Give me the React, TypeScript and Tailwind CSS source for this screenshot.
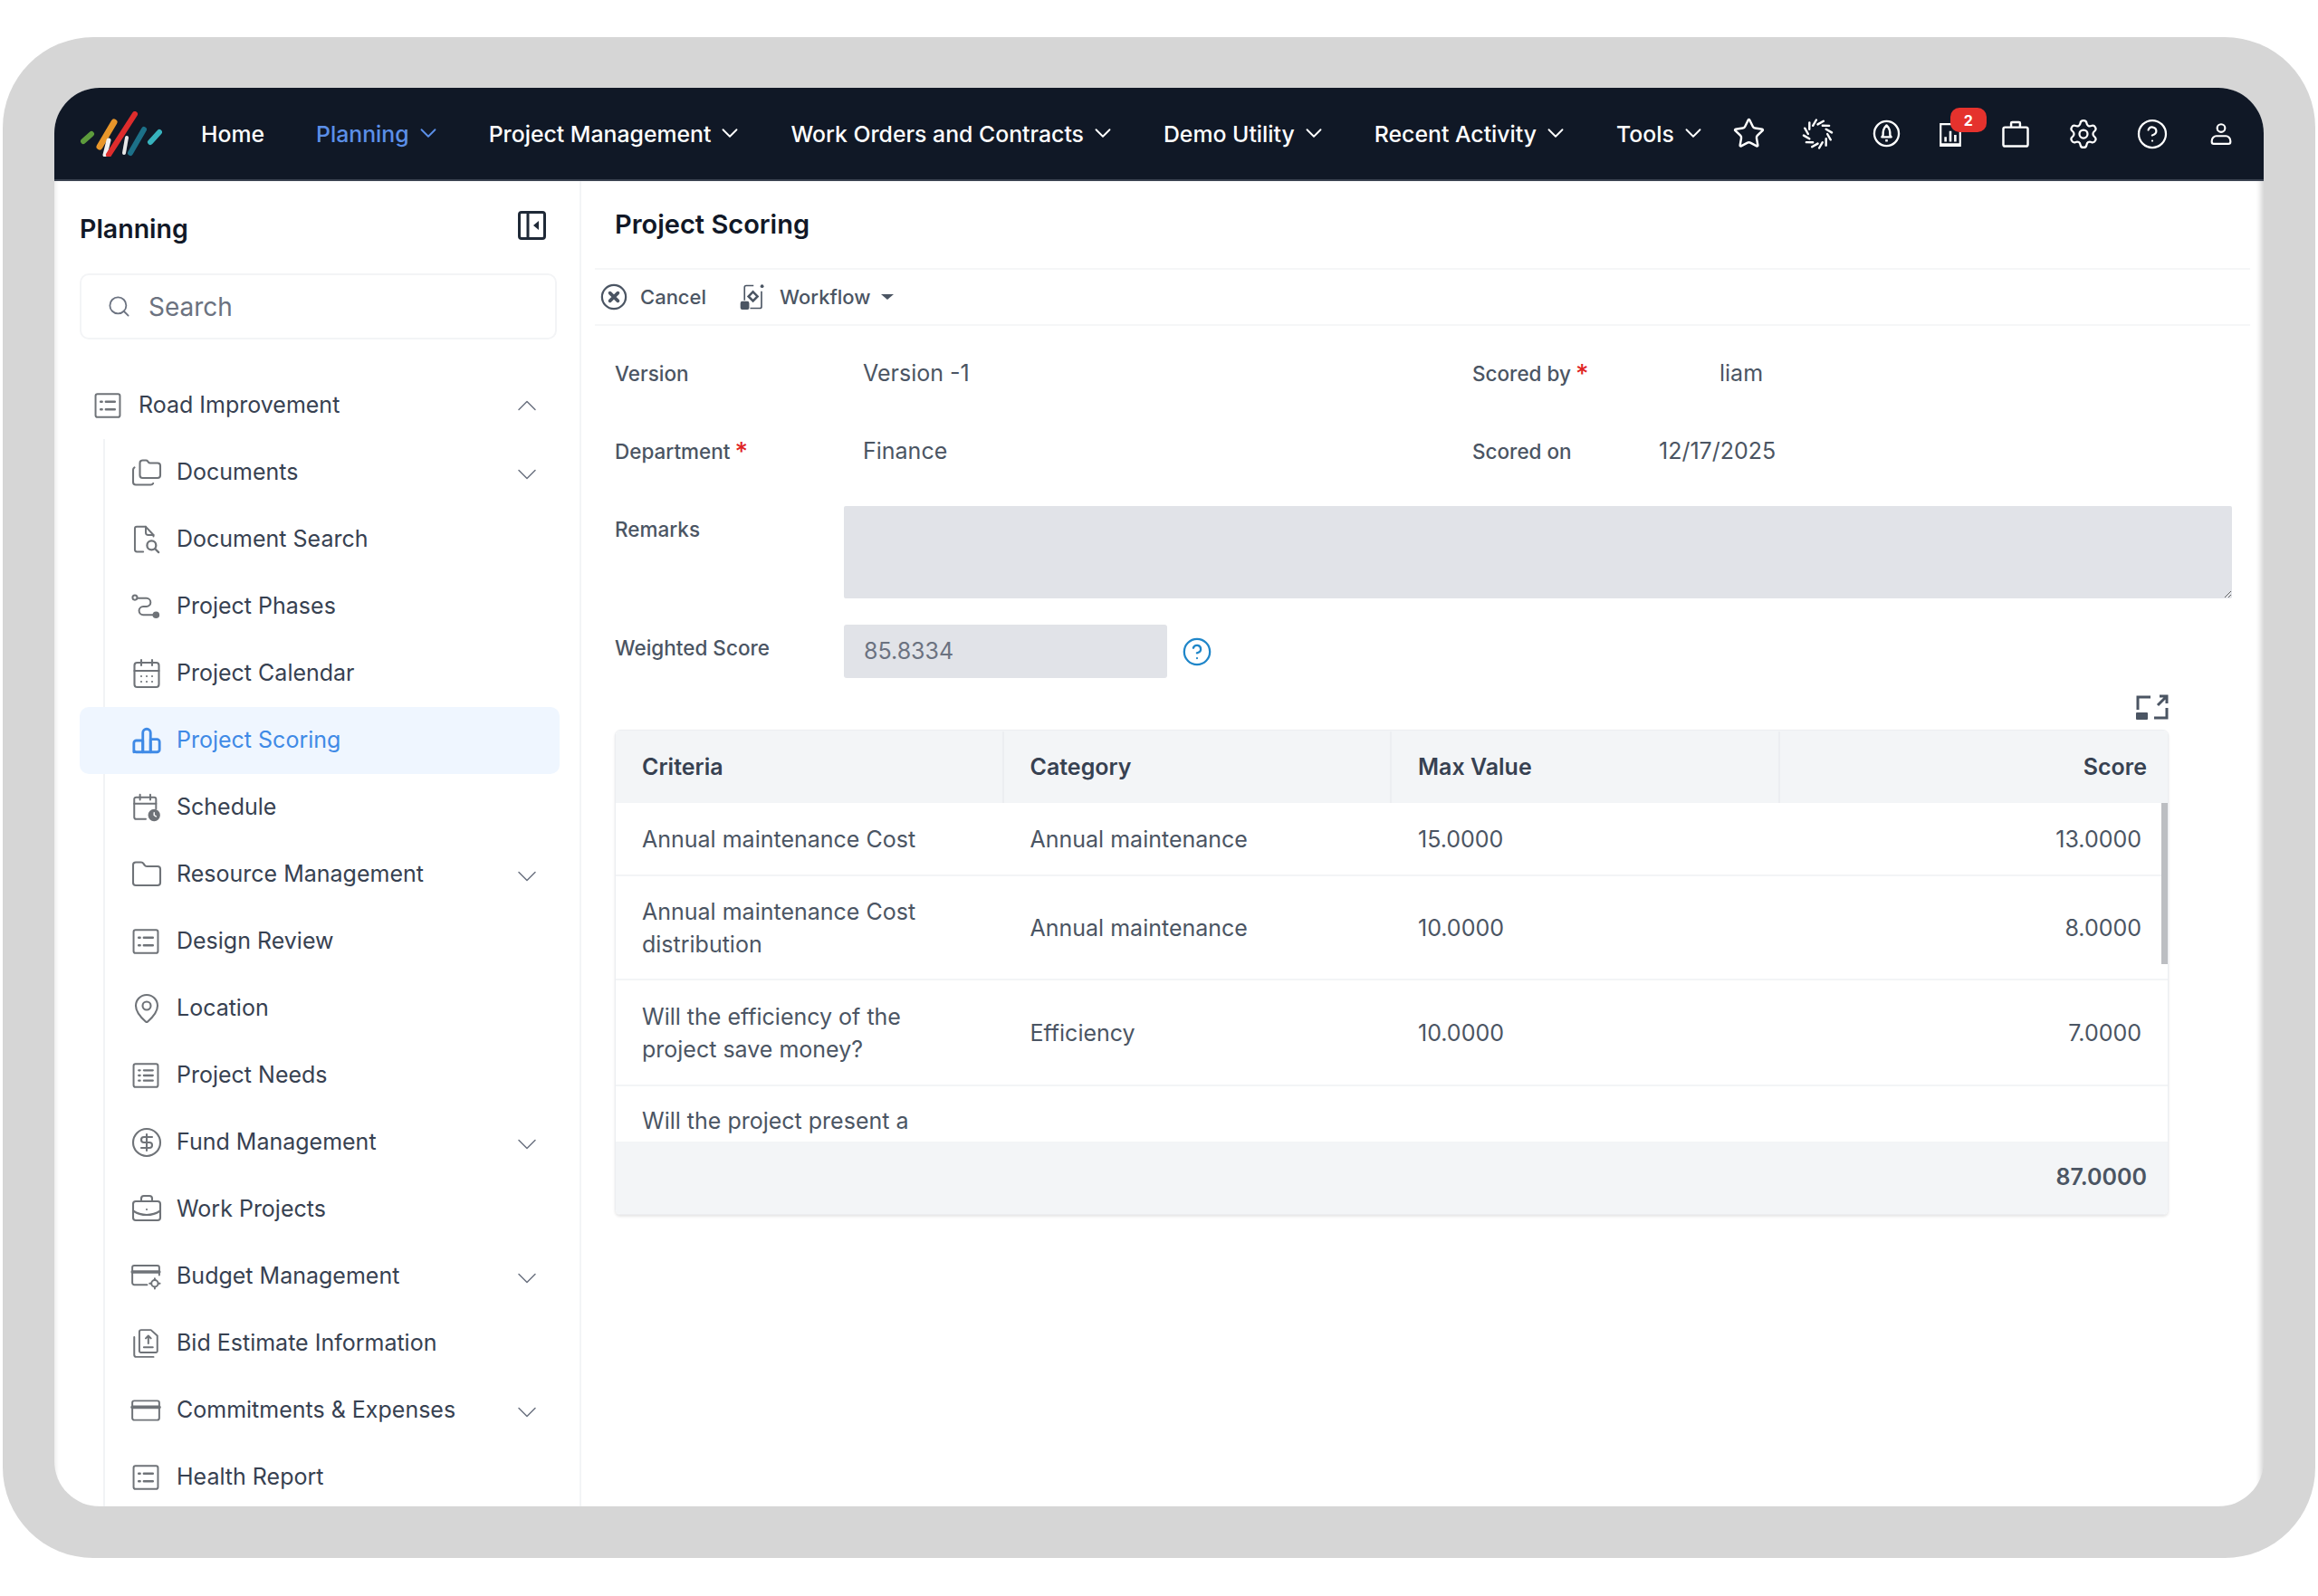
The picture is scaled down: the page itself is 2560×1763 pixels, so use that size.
import type { ReactNode } from "react";
import {
  BriefcaseBusiness,
  CalendarDays,
  ChevronDown,
  ChevronUp,
  CircleDollarSign,
  CircleHelp,
  Folder,
  Folders,
  MapPin,
  Search,
  Settings,
  Star,
} from "lucide-react";

const stroke = {
  fill: "none",
  stroke: "currentColor",
  strokeWidth: 1.4,
  strokeLinecap: "round" as const,
  strokeLinejoin: "round" as const,
};

const iconClass = "shrink-0";

function ListBox() {
  return (
    <svg width={34} height={34} viewBox="0 0 24 24" {...stroke} className={iconClass}>
      <rect x="2.500" y="3" width="19" height="18" rx="1.500" />
      <path d="M10.500 9h7M10.500 15h7M6.500 9h1M6.500 15h1" strokeWidth="1.800" />
    </svg>
  );
}

function TableBox() {
  return (
    <svg width={34} height={34} viewBox="0 0 24 24" {...stroke} className={iconClass}>
      <rect x="2.500" y="3" width="19" height="18" rx="1.500" />
      <path d="M6.500 8h1M6.500 12h1M6.500 16h1M10.500 8h7M10.500 12h7M10.500 16h7" strokeWidth="1.600" />
    </svg>
  );
}

function DocSearch() {
  return (
    <svg width={34} height={34} viewBox="0 0 24 24" {...stroke} className={iconClass}>
      <path d="M10 21.500H5a1.500 1.500 0 0 1-1.500-1.500V3.500A1.500 1.500 0 0 1 5 2h7l6 6.500v1" />
      <path d="M12 2v4.500a2 2 0 0 0 2 2h4" />
      <circle cx="16.500" cy="16.500" r="3.500" strokeWidth="1.600" />
      <path d="M19.200 19.200 22 22" strokeWidth="1.600" />
    </svg>
  );
}

function PhaseRoute() {
  return (
    <svg width={34} height={34} viewBox="0 0 24 24" {...stroke} className={iconClass}>
      <circle cx="3.500" cy="5" r="1.800" />
      <path d="M5.500 5.500h7a3.200 3.200 0 0 1 0 6.500H10a3.200 3.200 0 0 0 0 6.500h8" />
      <circle cx="20" cy="18.500" r="2" fill="currentColor" />
    </svg>
  );
}

function ScheduleCal() {
  return (
    <svg width={34} height={34} viewBox="0 0 24 24" {...stroke} className={iconClass}>
      <path d="M12 21H4.500A1.500 1.500 0 0 1 3 19.500v-14A1.500 1.500 0 0 1 4.500 4h14A1.500 1.500 0 0 1 20 5.500V13" />
      <path d="M3 9h17M7.500 2v4M15.500 2v4" />
      <circle cx="18.500" cy="18" r="4" fill="currentColor" />
      <path d="M18.500 16v2l1.500 1" stroke="#ffffff" strokeWidth="1" />
    </svg>
  );
}

function ScoreBars() {
  return (
    <svg width={36} height={34} viewBox="0 0 24 24" fill="none" stroke="currentColor" strokeWidth="2" strokeLinejoin="round" className={iconClass}>
      <path d="M2 21v-7a2 2 0 0 1 2-2h5v9H4a2 2 0 0 1-2-2z" />
      <path d="M9 21V6a3 3 0 0 1 6 0v15z" />
      <path d="M15 11h5a2 2 0 0 1 2 2v6a2 2 0 0 1-2 2h-5z" />
    </svg>
  );
}

function BudgetCard() {
  return (
    <svg width={34} height={34} viewBox="0 0 24 24" {...stroke} className={iconClass}>
      <path d="M13 18.500H3a1.500 1.500 0 0 1-1.500-1.500V5A1.500 1.500 0 0 1 3 3.500h18A1.500 1.500 0 0 1 22.500 5v6" />
      <path d="M1.500 8.500h21" strokeWidth="2.400" />
      <circle cx="19" cy="17.500" r="2.600" />
      <path d="M19 13.500v1.200M19 20.300v1.200M15 17.500h1.200M21.800 17.500H23" />
    </svg>
  );
}

function BidFiles() {
  return (
    <svg width={34} height={34} viewBox="0 0 24 24" {...stroke} className={iconClass}>
      <path d="M3 7v14a1.500 1.500 0 0 0 1.500 1.500H18" />
      <path d="M7 3a1.500 1.500 0 0 1 1.500-1.500H16l5 4.500v12a1 1 0 0 1-1 1H8a1 1 0 0 1-1-1z" />
      <path d="M14 6v6M12 8l2-2 2 2M10.500 15h7" />
    </svg>
  );
}

function CardIcon() {
  return (
    <svg width={34} height={34} viewBox="0 0 24 24" {...stroke} className={iconClass}>
      <rect x="1.500" y="4.500" width="21" height="15" rx="1.500" />
      <path d="M1.500 9.500h21" strokeWidth="2.600" />
    </svg>
  );
}

function Logo() {
  return (
    <svg width={90} height={50} viewBox="0 0 90 50" fill="none" strokeLinecap="round" className="shrink-0">
      <path d="M3 33 12 25" stroke="#5d9b3c" strokeWidth="6" />
      <path d="M21 39 37 12" stroke="#e8962a" strokeWidth="7" />
      <path d="M31 32 27 48" stroke="#f2f2f2" strokeWidth="5" />
      <path d="M51 29 48 46" stroke="#e8e8e8" strokeWidth="4" />
      <path d="M31 48 60 3" stroke="#de2c2c" strokeWidth="6" />
      <path d="M55 46 70 20" stroke="#1c7088" strokeWidth="6" />
      <path d="M77 34 87 23" stroke="#37b2bd" strokeWidth="6" />
    </svg>
  );
}

function SwirlIcon() {
  // ring of twelve slanted dashes
  const dashes = Array.from({ length: 12 }, (_, i) => {
    const a = (i * Math.PI) / 6;
    const b = a + 0.42;
    return `M${(12 + 7.5 * Math.cos(a)).toFixed(2)} ${(12 + 7.5 * Math.sin(a)).toFixed(2)}L${(12 + 11 * Math.cos(b)).toFixed(2)} ${(12 + 11 * Math.sin(b)).toFixed(2)}`;
  }).join("");
  return (
    <svg width={35} height={34} viewBox="0 0 24 24" fill="none" stroke="currentColor" strokeWidth="1.700" strokeLinecap="round" className={iconClass}>
      <path d={dashes} />
    </svg>
  );
}

function RocketCircle() {
  return (
    <svg width={31} height={31} viewBox="0 0 24 24" fill="none" stroke="currentColor" strokeWidth="1.800" strokeLinejoin="round" className={iconClass}>
      <circle cx="12" cy="12" r="10.500" />
      <path d="M12 5c2.400 2.200 3.200 5 3 8.500l1 1.500H8l1-1.500C8.800 10 9.600 7.200 12 5z" />
      <path d="M11 18h2" />
    </svg>
  );
}

function ChartIcon() {
  return (
    <svg width={26} height={28} viewBox="0 0 24 26" fill="none" stroke="currentColor" strokeWidth="2" className={iconClass}>
      <path d="M2 2h20v22H2z" />
      <path d="M7 20v-5M12 20V9M17 20v-7" strokeWidth="2.400" />
      <path d="M2 23h20" strokeWidth="2.600" />
    </svg>
  );
}

function BagIcon() {
  return (
    <svg width={32} height={30} viewBox="0 0 26 24" fill="none" stroke="currentColor" strokeWidth="2" strokeLinejoin="round" className={iconClass}>
      <rect x="2" y="6" width="22" height="17" rx="1.500" />
      <path d="M9 6V2.500a1 1 0 0 1 1-1h6a1 1 0 0 1 1 1V6" />
    </svg>
  );
}

function UserIcon() {
  return (
    <svg width={26} height={27} viewBox="0 0 24 24" fill="none" stroke="currentColor" strokeWidth="2" className={iconClass}>
      <circle cx="12" cy="6.500" r="4" />
      <path d="M2.500 19.500c0-3 2.500-5 4.500-5h10c2 0 4.500 2 4.500 5v1a2 2 0 0 1-2 2h-15a2 2 0 0 1-2-2z" />
    </svg>
  );
}

function CancelIcon() {
  return (
    <svg width={30} height={30} viewBox="0 0 24 24" fill="none" stroke="#4b5563" strokeWidth="1.800" className={iconClass}>
      <circle cx="12" cy="12" r="10.500" />
      <path d="M8.500 8.500l7 7M15.500 8.500l-7 7" strokeWidth="3" strokeLinecap="round" />
    </svg>
  );
}

function WorkflowIcon() {
  return (
    <svg width={30} height={30} viewBox="0 0 24 24" fill="none" stroke="#4b5563" strokeWidth="1.300" className={iconClass}>
      <path d="M5 15V3.500a1.500 1.500 0 0 1 1.500-1.500H13M20 7v13.500a1.500 1.500 0 0 1-1.500 1.500H10" />
      <path d="M12.500 7.500l4 4-4 4-4-4z" strokeWidth="2" />
      <rect x="2" y="16.500" width="6.500" height="6" rx="1" fill="#4b5563" />
      <circle cx="20.500" cy="2.500" r="1.500" fill="#4b5563" stroke="none" />
    </svg>
  );
}

function ExpandIcon() {
  return (
    <svg width={36} height={28} viewBox="0 0 36 28" fill="none" stroke="#4b5563" strokeWidth="3" className={iconClass}>
      <path d="M2 17V3h14M34 15v11H20M33 3l-9 9M26 2h8v8" />
      <rect x="0" y="20" width="13" height="8" rx="1" fill="#4b5563" stroke="none" />
    </svg>
  );
}

function CollapseIcon() {
  return (
    <svg width={31} height={32} viewBox="0 0 31 32" fill="none" stroke="#1f2937" strokeWidth="3" className={iconClass}>
      <rect x="1.500" y="1.500" width="28" height="29" rx="2.500" />
      <path d="M11 2v28" />
      <path d="M23 11v10l-6-5z" fill="#1f2937" stroke="none" />
    </svg>
  );
}

type SideItem = { label: string; icon: ReactNode; chevron?: boolean; active?: boolean };

const lucideProps = { size: 36, strokeWidth: 1.4, className: iconClass };

const sideItems: SideItem[] = [
  { label: "Documents", icon: <Folders {...lucideProps} />, chevron: true },
  { label: "Document Search", icon: <DocSearch /> },
  { label: "Project Phases", icon: <PhaseRoute /> },
  { label: "Project Calendar", icon: <CalendarDays {...lucideProps} /> },
  { label: "Project Scoring", icon: <ScoreBars />, active: true },
  { label: "Schedule", icon: <ScheduleCal /> },
  { label: "Resource Management", icon: <Folder {...lucideProps} />, chevron: true },
  { label: "Design Review", icon: <ListBox /> },
  { label: "Location", icon: <MapPin {...lucideProps} /> },
  { label: "Project Needs", icon: <TableBox /> },
  { label: "Fund Management", icon: <CircleDollarSign {...lucideProps} />, chevron: true },
  { label: "Work Projects", icon: <BriefcaseBusiness {...lucideProps} /> },
  { label: "Budget Management", icon: <BudgetCard />, chevron: true },
  { label: "Bid Estimate Information", icon: <BidFiles /> },
  { label: "Commitments & Expenses", icon: <CardIcon />, chevron: true },
  { label: "Health Report", icon: <ListBox /> },
];

const navItems = ["Planning", "Project Management", "Work Orders and Contracts", "Demo Utility", "Recent Activity", "Tools"];

const rows = [
  { criteria: ["Annual maintenance Cost"], category: "Annual maintenance", max: "15.0000", score: "13.0000", h: "h-[81px]" },
  { criteria: ["Annual maintenance Cost", "distribution"], category: "Annual maintenance", max: "10.0000", score: "8.0000", h: "h-[115px]" },
  { criteria: ["Will the efficiency of the", "project save money?"], category: "Efficiency", max: "10.0000", score: "7.0000", h: "h-[117px]" },
];

function Required() {
  return <span className="ml-[5px] text-[28px] leading-none text-[#e02424]">*</span>;
}

function Navbar() {
  return (
    <header className="flex h-[103px] shrink-0 items-center border-b-2 border-[#3a4250] bg-[#101826] pl-[29px] text-white">
      <Logo />
      <nav className="ml-[43px] flex items-center gap-[52px] pt-[2px] text-[24.8px] font-medium">
        <span className="mr-[5px]">Home</span>
        {navItems.map((item) => (
          <span key={item} className={`flex items-center gap-[6px] ${item === "Planning" ? "text-[#5b8fe8]" : ""}`}>
            {item}
            <ChevronDown size={30} strokeWidth={1.5} className="-mt-[3px] shrink-0" />
          </span>
        ))}
      </nav>
      <div className="ml-[31px] flex items-center gap-[43px]">
        <span className="flex w-[31px] justify-center"><Star size={37} strokeWidth={1.6} className={iconClass} /></span>
        <SwirlIcon />
        <RocketCircle />
        <span className="relative -ml-px mt-[3px] flex">
          <ChartIcon />
          <span className="absolute left-[13px] top-[-16px] flex h-[27px] w-[40px] items-center justify-center rounded-[10px] bg-[#e5322d] text-[16px] font-bold">
            2
          </span>
        </span>
        <BagIcon />
        <span className="ml-[2px] flex w-[29px] justify-center"><Settings size={36} strokeWidth={1.5} className={iconClass} /></span>
        <span className="ml-[3px] flex w-[30px] justify-center"><CircleHelp size={36} strokeWidth={1.5} className={iconClass} /></span>
        <span className="ml-[5px] flex"><UserIcon /></span>
      </div>
    </header>
  );
}

function Sidebar() {
  return (
    <aside className="flex w-[582px] shrink-0 flex-col overflow-hidden border-r-2 border-[#f3f4f6] pl-[28px] pr-[22px]">
      <div className="flex h-[102px] shrink-0 items-center justify-between pr-[15px] pt-[5px]">
        <h2 className="text-[28.500px] font-semibold text-[#111827]">Planning</h2>
        <span className="-mt-[10px] flex"><CollapseIcon /></span>
      </div>
      <div className="mr-[3px] flex h-[73px] shrink-0 items-center gap-[19px] rounded-[10px] border-2 border-[#f3f4f6] pl-[28px] text-[28px] text-[#6b7280]">
        <Search size={27} strokeWidth={1.6} className={iconClass} />
        Search
      </div>

      <div className="mt-[36px] flex h-[74px] shrink-0 items-center pl-[16px] pr-[18px] text-[25px] text-[#374151]">
        <span className="-ml-[2px] flex w-[49px] shrink-0 text-[#6f7378]"><ListBox /></span>
        <span className="ml-[2px] flex-1">Road Improvement</span>
        <ChevronUp size={36} strokeWidth={1} className="shrink-0 text-[#6b7280]" />
      </div>

      <ul className="relative">
        <li className="absolute bottom-0 left-[26px] top-0 w-[2px] bg-[#f1f3f5]" />
        {sideItems.map((item) => (
          <li
            key={item.label}
            className={`relative flex h-[74px] items-center rounded-[10px] pl-[58px] pr-[18px] text-[25px] ${
              item.active ? "bg-[#eff6ff] text-[#3f8ae6]" : "text-[#374151]"
            }`}
          >
            <span className={`-ml-[2px] flex w-[49px] shrink-0 ${item.active ? "" : "text-[#6f7378]"}`}>{item.icon}</span>
            <span className="ml-[2px] flex-1">{item.label}</span>
            {item.chevron && <ChevronDown size={36} strokeWidth={1} className="mt-[4px] shrink-0 text-[#6b7280]" />}
          </li>
        ))}
      </ul>
    </aside>
  );
}

function ScoreTable() {
  return (
    <div className="mt-[11px] w-[1716px] overflow-hidden rounded-[6px] border border-[#eceef1] text-[25px] text-[#4b5563] shadow-[0_2px_3px_rgba(0,0,0,0.1)]">
      <div className="grid h-[80px] grid-cols-4 items-center bg-[#f3f5f7] pt-[1px] font-semibold text-[#374151]">
        <div className="flex h-full items-center border-r-2 border-[#eceef1] pl-[29px]">Criteria</div>
        <div className="flex h-full items-center border-r-2 border-[#eceef1] pl-[29px]">Category</div>
        <div className="flex h-full items-center border-r-2 border-[#eceef1] pl-[29px]">Max Value</div>
        <div className="pr-[23px] text-right">Score</div>
      </div>

      <div className="relative h-[374px] overflow-hidden">
        {rows.map((row) => (
          <div key={row.max + row.score} className={`grid grid-cols-4 items-center border-b-2 border-[#f3f4f6] leading-[36px] ${row.h}`}>
            <div className="pl-[29px]">
              {row.criteria.map((line) => (
                <div key={line}>{line}</div>
              ))}
            </div>
            <div className="pl-[29px]">{row.category}</div>
            <div className="pl-[29px]">{row.max}</div>
            <div className="pr-[29px] text-right">{row.score}</div>
          </div>
        ))}
        <div className="pl-[29px] pt-[20px] leading-[36px]">Will the project present a</div>
        <div className="absolute right-0 top-0 h-[178px] w-[7px] bg-[#bcbec2]" />
      </div>

      <div className="flex h-[80px] items-center justify-end bg-[#f3f5f7] pr-[23px] font-semibold">87.0000</div>
    </div>
  );
}

function MainPanel() {
  return (
    <main className="flex min-w-0 flex-1 flex-col">
      <div className="mx-[15px] flex h-[98px] shrink-0 items-center border-b-2 border-[#f5f6f7] pl-[22px]">
        <h1 className="text-[29px] font-semibold text-[#111827]">Project Scoring</h1>
      </div>
      <div className="mx-[15px] flex h-[62px] shrink-0 items-center border-b-2 border-[#f5f6f7] pl-[6px] text-[22px] font-medium text-[#4b5563]">
        <CancelIcon />
        <span className="ml-[14px]">Cancel</span>
        <span className="ml-[36px] flex"><WorkflowIcon /></span>
        <span className="ml-[15px]">Workflow</span>
        <span className="ml-[12px] h-0 w-0 border-x-[7px] border-t-[6px] border-x-transparent border-t-[#4b5563]" />
      </div>

      <div className="flex flex-col pl-[37px] pt-[10px] text-[25px] text-[#4b5563]">
        <div className="flex h-[86px] items-center">
          <span className="w-[274px] text-[22.500px] font-medium">Version</span>
          <span className="w-[673px]">Version -1</span>
          <span className="flex w-[273px] items-center text-[22.500px] font-medium">Scored by<Required /></span>
          <span>liam</span>
        </div>
        <div className="flex h-[86px] items-center">
          <span className="flex w-[274px] items-center text-[22.500px] font-medium">Department<Required /></span>
          <span className="w-[673px]">Finance</span>
          <span className="w-[206px] text-[22.500px] font-medium">Scored on</span>
          <span>12/17/2025</span>
        </div>
        <div className="mt-[17px] flex">
          <span className="w-[253px] pt-[9px] text-[22.500px] font-medium">Remarks</span>
          <textarea disabled className="h-[102px] w-[1533px] resize-y rounded-[2px] bg-[#e1e3e8]" />
        </div>
        <div className="mt-[29px] flex items-center">
          <span className="w-[253px] pb-[8px] text-[22.500px] font-medium">Weighted Score</span>
          <div className="flex h-[59px] w-[357px] items-center rounded-[3px] bg-[#e1e3e8] pl-[22px] text-[#6b7280]">85.8334</div>
          <CircleHelp size={34} strokeWidth={1.6} className="ml-[16px] shrink-0 text-[#1f86c9]" />
        </div>
        <div className="mt-[18px] flex w-[1716px] justify-end">
          <ExpandIcon />
        </div>
        <ScoreTable />
      </div>
    </main>
  );
}

export default function App() {
  return (
    <div className="h-[1763px] w-[2560px] bg-white pl-[3px] pt-[41px] font-['Inter',sans-serif]">
      <div className="h-[1680px] w-[2554px] rounded-[100px] bg-[#d6d6d6] px-[57px] py-[56px]">
        <div className="flex h-[1567px] flex-col overflow-hidden rounded-[50px] bg-white">
          <Navbar />
          <div className="flex min-h-0 flex-1 shadow-[inset_-7px_0_6px_-4px_rgba(0,0,0,0.18),inset_5px_0_4px_-3px_rgba(0,0,0,0.08)]">
            <Sidebar />
            <MainPanel />
          </div>
        </div>
      </div>
    </div>
  );
}
